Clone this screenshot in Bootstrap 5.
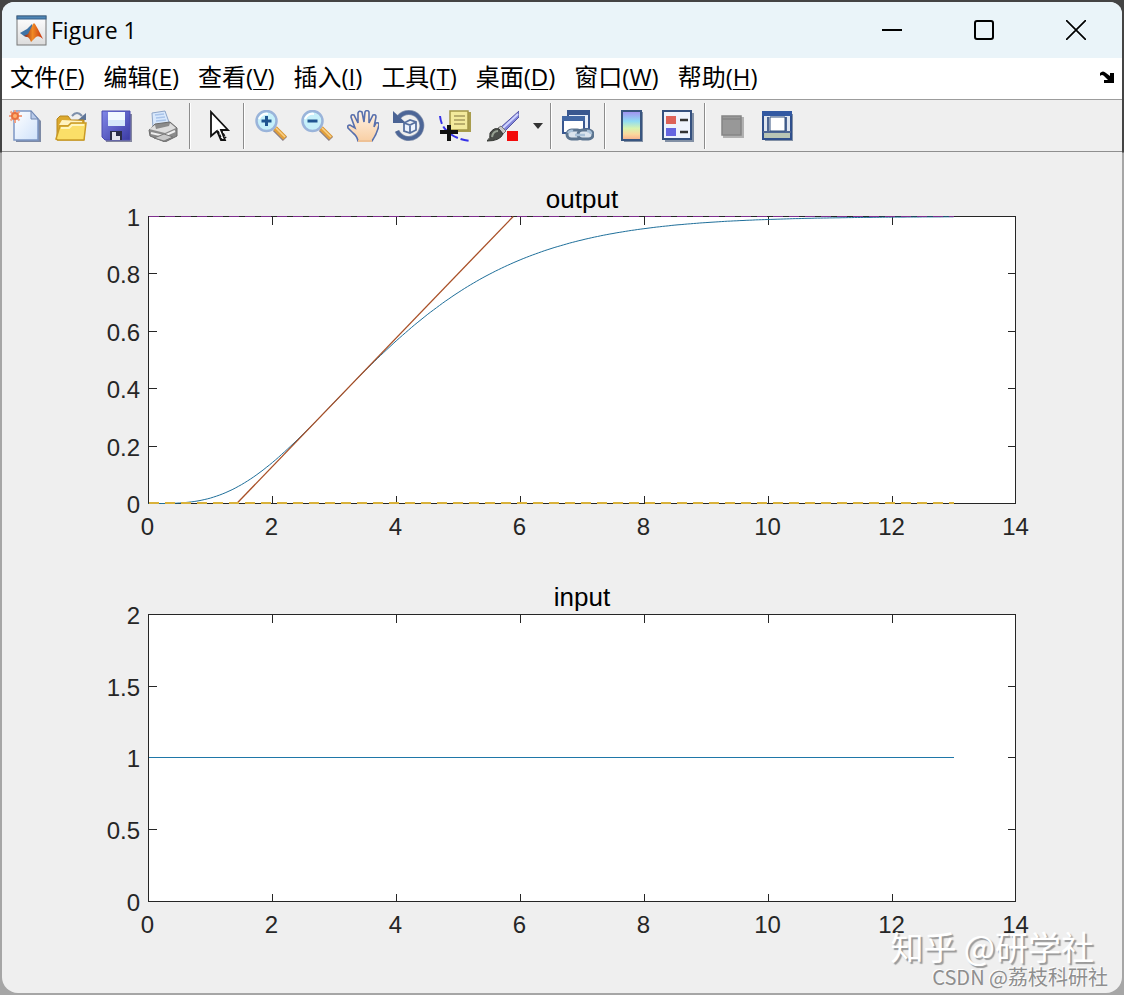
<!DOCTYPE html>
<html lang="zh-CN">
<head>
<meta charset="utf-8">
<meta name="viewport" content="width=device-width, initial-scale=1">
<title>Figure 1</title>
<link href="https://cdn.jsdelivr.net/npm/bootstrap@5.3.0/dist/css/bootstrap.min.css" rel="stylesheet">
<style>
  body { background: linear-gradient(#444 0, #444 152px, #a6a6a6 153px, #a6a6a6 100%); font-family: "Open Sans", "Noto Sans CJK SC", sans-serif; color: #000; padding: 2px; }
  .fig-window { min-height: calc(100vh - 4px); background: #efefef; border-radius: 12px 12px 16px 16px; }
  .title-bar { height: 56px; background: #eaf4f9; padding-left: 14px; }
  .title-text { font-size: 23px; line-height: 32px; font-weight: 400; }
  .win-btn { width: 92px; height: 54px; }
  .menu-bar { height: 41px; background: #fff; }
  .menu-bar .nav-link { font: 24px/32px "Open Sans", "Noto Sans CJK SC", sans-serif; color: #000; }
  .menu-list { column-gap: 19px; }
  .menu-bar u { text-underline-offset: 3px; text-decoration-thickness: 1px; }
  .tool-bar { border-top: 1px solid #9c9c9c; border-bottom: 1px solid #8f8f8f; height: 53px; }
  .plain { background: none; border: 0; padding: 0; border-radius: 0; display: flex; align-items: center; justify-content: center; flex: none; color: inherit; }
  .tool { width: 46px; height: 46px; }
  .tool-wide { width: 50px; }
  .tool-drop { width: 19px; }
  .sep { width: 8px; height: 46px; flex: none; background: linear-gradient(90deg, transparent 3px, #8c8c8c 3px, #8c8c8c 4px, #fff 4px, #fff 5px, transparent 5px); }
  .plot { display: block; width: 100%; height: auto; font-family: "Liberation Sans", Arial, sans-serif; }
  .plot-area { padding-top: 1px; }
  .ticks text { font-size: 24px; fill: #262626; }
  .heading { font-size: 26px; fill: #000; text-anchor: middle; }
  .frame { fill: none; stroke: #262626; shape-rendering: crispEdges; }
  .series { fill: none; }
  .flat { shape-rendering: crispEdges; }
  .marks { right: 14px; bottom: 4px; text-align: right; pointer-events: none; }
  .mark-big { font: 33px/38px "Noto Sans CJK SC", sans-serif; color: #fff; text-shadow: 2px 2px 1px #999; margin-right: 14px; }
  .mark-small { font: 20px/24px "Noto Sans CJK SC", sans-serif; color: #8e8e8e; text-shadow: -1px -1px 0 #fff; }
</style>
</head>
<body>
<main class="fig-window position-relative d-flex flex-column overflow-hidden">
  <header class="title-bar d-flex align-items-center">
    <svg class="flex-shrink-0" width="31" height="31" viewBox="0 0 31 31" aria-hidden="true">
      <defs>
        <linearGradient id="pk" x1="0" x2="1"><stop offset="0" stop-color="#8e1d12"/><stop offset=".45" stop-color="#f08a24"/><stop offset="1" stop-color="#c5300f"/></linearGradient>
        <linearGradient id="bx" x2="0" y2="1"><stop offset="0" stop-color="#fff"/><stop offset="1" stop-color="#dcdcdc"/></linearGradient>
      </defs>
      <rect x="1" y="1" width="29" height="29" fill="url(#bx)" stroke="#777"/>
      <rect x="1" y="1" width="29" height="3" fill="#4f86b5" stroke="#37608a"/>
      <path d="M4 18l7-4 5-5 1 4-6 9-3-1z" fill="#3f73a5"/>
      <path d="M8 21l4-2 5-10q1-1.500 2 0 3 5 5 9l3 6q-4-4-7-2l-5 5q-2-5-4-5z" fill="url(#pk)"/>
    </svg>
    <h1 class="title-text m-0 ms-1 me-auto">Figure 1</h1>
    <button class="plain win-btn" type="button" aria-label="Minimize"><svg width="20" height="20"><path d="M0 10h20" stroke="#000" stroke-width="2"/></svg></button>
    <button class="plain win-btn" type="button" aria-label="Maximize"><svg width="20" height="20"><rect x="1" y="1" width="18" height="18" rx="2" fill="none" stroke="#000" stroke-width="2"/></svg></button>
    <button class="plain win-btn" type="button" aria-label="Close"><svg width="20" height="20"><path d="M0 0L20 20M20 0L0 20" stroke="#000" stroke-width="1.700"/></svg></button>
  </header>

  <nav class="menu-bar d-flex align-items-center px-2 pb-1" aria-label="Menu">
    <ul class="menu-list nav flex-nowrap">
      <li><a class="nav-link p-0 text-nowrap" href="#">文件(<u>F</u>)</a></li>
      <li><a class="nav-link p-0 text-nowrap" href="#">编辑(<u>E</u>)</a></li>
      <li><a class="nav-link p-0 text-nowrap" href="#">查看(<u>V</u>)</a></li>
      <li><a class="nav-link p-0 text-nowrap" href="#">插入(<u>I</u>)</a></li>
      <li><a class="nav-link p-0 text-nowrap" href="#">工具(<u>T</u>)</a></li>
      <li><a class="nav-link p-0 text-nowrap" href="#">桌面(<u>D</u>)</a></li>
      <li><a class="nav-link p-0 text-nowrap" href="#">窗口(<u>W</u>)</a></li>
      <li><a class="nav-link p-0 text-nowrap" href="#">帮助(<u>H</u>)</a></li>
    </ul>
    <button class="plain ms-auto" type="button" aria-label="Dock"><svg width="14" height="12" viewBox="0 0 14 12"><path d="M0 2q3-3 6 0l4 3V2h4v10H4V9h4L4 5Q2 3 0 5z" fill="#000"/></svg></button>
  </nav>

  <div class="tool-bar d-flex align-items-center" role="toolbar" aria-label="Figure tools">
    <button class="plain tool" type="button" aria-label="New"><svg width="32" height="32" viewBox="0 0 32 32">
      <defs><linearGradient id="pg" x2="1" y2="1"><stop offset="0" stop-color="#fff"/><stop offset="1" stop-color="#cfe2fb"/></linearGradient></defs>
      <path d="M7 3h17l8 8v21H7z" fill="#7d8aa5"/><path d="M5 1h17l7 8v21H5z" fill="url(#pg)" stroke="#7c96c4" stroke-width="1.500"/><path d="M22 1v8h7z" fill="#b9cbea" stroke="#7187b0"/>
      <path d="M6 0v13M0 6h13M1.500 1.500l9 9M10.500 1.500l-9 9" stroke="#f0a083" stroke-width="2"/><circle cx="6" cy="6" r="4" fill="#e8713f"/><circle cx="6" cy="6" r="2" fill="#ffb070"/></svg></button>
    <button class="plain tool" type="button" aria-label="Open"><svg width="32" height="32" viewBox="0 0 32 32">
      <path d="M17 6q5-6 10 0" fill="none" stroke="#7d8faa" stroke-width="2"/><path d="M31 3v7h-8z" fill="#5f7598"/>
      <path d="M2 30V9l3-3h8l3 4h13v20z" fill="#dca92e" stroke="#b5861c"/><path d="M4 15L7 10l20 1v4z" fill="#fff3c0"/>
      <path d="M1 29l4-13h8l3-3h15l-2 17H3z" fill="#fbdf68" stroke="#c99a26" stroke-width="1.500"/><path d="M6 18h8l3-3h12" stroke="#fff6bd" stroke-width="2" fill="none"/></svg></button>
    <button class="plain tool" type="button" aria-label="Save"><svg width="32" height="32" viewBox="0 0 32 32">
      <defs><linearGradient id="sv" x2="1" y2="1"><stop offset="0" stop-color="#8187e8"/><stop offset="1" stop-color="#3a3aa4"/></linearGradient></defs>
      <path d="M3 4h28v28H5z" fill="#83859f"/><path d="M1 1h28v29H4l-3-3z" fill="url(#sv)" stroke="#4a4bb0"/><path d="M7 2h17v14H7z" fill="#f2f8ff"/><path d="M7 10h17v6H7z" fill="#d6e8fb"/><path d="M9 21h12v9H9z" fill="#2b2d49"/><path d="M11 22h4v4h4v4h-8z" fill="#e5e5ee"/></svg></button>
    <button class="plain tool" type="button" aria-label="Print"><svg width="32" height="32" viewBox="0 0 32 32">
      <path d="M6 18L5 3 18 1l5 14z" fill="#d8e8fc" stroke="#8ea5c8"/><path d="M8 5l9-1M9 8l9-1M9 11l10-1" stroke="#a9c4ea" stroke-width="1.500"/>
      <path d="M2 20l6-6 15-2 7 6v8l-12 6L3 26z" fill="#8b8b8b" stroke="#6b6b6b"/><path d="M2 19l6-4 1 4 13-3 1-3 6 5-11 5z" fill="#dedede"/><path d="M4 23l13 3 11-5" fill="none" stroke="#efefef" stroke-width="2"/><path d="M7 28l10 3 9-4-9-3z" fill="#c9c9c9" stroke="#777"/></svg></button>
    <span class="sep"></span>
    <button class="plain tool" type="button" aria-label="Edit plot"><svg width="32" height="32" viewBox="0 0 32 32">
      <path d="M10 2v24l6-5 4 9h4l-4-10h7z" fill="#fff" stroke="#111" stroke-width="1.800"/><path d="M17 21l4 9M20 20l5 8" stroke="#111" stroke-width="1.500" stroke-dasharray="3 1"/></svg></button>
    <span class="sep"></span>
    <button class="plain tool" type="button" aria-label="Zoom in"><svg width="32" height="32" viewBox="0 0 32 32">
      <path d="M20 19l10 10" stroke="#8b7f86" stroke-width="6"/><path d="M20 18l10 10" stroke="#e2a03b" stroke-width="5"/><path d="M21 18l9 9" stroke="#f8d08a" stroke-width="1.500"/>
      <circle cx="11.500" cy="11" r="10" fill="#c6f0fa" stroke="#9ab4da" stroke-width="2.500"/><path d="M4 9q3-6 9-5" stroke="#fff" stroke-width="2" fill="none"/><path d="M11.500 6v10M6.500 11h10" stroke="#1f5590" stroke-width="3"/></svg></button>
    <button class="plain tool" type="button" aria-label="Zoom out"><svg width="32" height="32" viewBox="0 0 32 32">
      <path d="M20 19l10 10" stroke="#8b7f86" stroke-width="6"/><path d="M20 18l10 10" stroke="#e2a03b" stroke-width="5"/><path d="M21 18l9 9" stroke="#f8d08a" stroke-width="1.500"/>
      <circle cx="11.500" cy="11" r="10" fill="#c6f0fa" stroke="#9ab4da" stroke-width="2.500"/><path d="M4 9q3-6 9-5" stroke="#fff" stroke-width="2" fill="none"/><path d="M6.500 11h10" stroke="#1f5590" stroke-width="3"/></svg></button>
    <button class="plain tool" type="button" aria-label="Pan"><svg width="32" height="32" viewBox="0 0 32 32">
      <defs><linearGradient id="hn" x2="0" y2="1"><stop offset="0" stop-color="#fff4e8"/><stop offset="1" stop-color="#f9cfa4"/></linearGradient></defs>
      <path d="M11 31q-1-5-5-8l-5-5q-1-3 2-3l5 3L4 7q0-3 3-2l4 8L11 3q1-3 4-1l2 10 1-10q2-3 4 0v11l4-8q3-1 3 2l-2 10 2-4q3-1 3 2-2 9-7 16z" fill="url(#hn)" stroke="#5870ad" stroke-width="1.600"/><path d="M11 31h14" stroke="#eec195" stroke-width="2"/></svg></button>
    <button class="plain tool" type="button" aria-label="Rotate 3D"><svg width="32" height="32" viewBox="0 0 32 32">
      <path d="M6 7a13 13 0 1 1-2 14" fill="none" stroke="#8794ae" stroke-width="5"/><path d="M6 7a13 13 0 1 1-2 14" fill="none" stroke="#4d6697" stroke-width="3.500"/><path d="M0 1v12h13z" fill="#4a6394"/>
      <path d="M11 13l6-3 6 2v8l-6 3-6-2zM11 13l6 2 6-3M17 15v8" fill="#edf3fd" stroke="#57709f" stroke-width="1.800"/></svg></button>
    <button class="plain tool" type="button" aria-label="Data cursor"><svg width="32" height="32" viewBox="0 0 32 32">
      <path d="M1 6q1 9 6 14 8 9 24 11" fill="none" stroke="#3530e8" stroke-width="2" stroke-dasharray="8 3"/><path d="M12 2h20v20H12z" fill="#a99d4e"/><path d="M11 1h18v19H11z" fill="#f3ea9c" stroke="#a39647" stroke-width="1.500"/><path d="M15 6h11M15 10h11M15 14h11" stroke="#a69a5d" stroke-width="1.500"/><path d="M10 15v16M1 22h18" stroke="#111" stroke-width="4"/></svg></button>
    <button class="plain tool tool-wide" type="button" aria-label="Brush"><svg width="32" height="32" viewBox="0 0 32 32">
      <path d="M13 18L32 1v6L17 22z" fill="#8185d9" stroke="#5455a5"/><path d="M16 18L31 4" stroke="#d0d4ff" stroke-width="2"/><path d="M11 18l3-2 5 5-3 3z" fill="#c8c8c8" stroke="#777"/><path d="M0 31q4-3 3-8 4-6 9-4l4 5q-3 7-16 7z" fill="#4a4d49" stroke="#343632"/><path d="M5 27q1-6 6-6" stroke="#96a092" stroke-width="2" fill="none"/><path d="M20 21h11v10H20z" fill="#f30b0b"/></svg></button>
    <button class="plain tool tool-drop" type="button" aria-label="Brush options"><svg width="10" height="6"><path d="M0 0h10L5 6z" fill="#333"/></svg></button>
    <span class="sep"></span>
    <button class="plain tool" type="button" aria-label="Link plots"><svg width="32" height="32" viewBox="0 0 32 32">
      <path d="M6 1h21v18H6z" fill="#e8eef8" stroke="#39578f" stroke-width="2"/><path d="M6 0h22v5H6z" fill="#39578f"/><path d="M1 7h21v16H1z" fill="#fff" stroke="#39578f" stroke-width="2"/><path d="M0 6h23v5H0z" fill="#4267a4"/>
      <rect x="5" y="20" width="15" height="9" rx="4.500" fill="#dbe4ed" stroke="#5c7590" stroke-width="3"/><rect x="16" y="20" width="15" height="9" rx="4.500" fill="#dbe4ed" stroke="#5c7590" stroke-width="3"/><path d="M6 23q2-3 5-2M13 25h10M25 21q4 0 4 3" stroke="#a9c1d8" stroke-width="2.500" fill="none"/></svg></button>
    <span class="sep"></span>
    <button class="plain tool" type="button" aria-label="Insert colorbar"><svg width="32" height="32" viewBox="0 0 32 32">
      <defs><linearGradient id="cb" x2="0" y2="1"><stop offset="0" stop-color="#a38df0"/><stop offset=".35" stop-color="#8fdcf4"/><stop offset=".6" stop-color="#d8f4b0"/><stop offset=".8" stop-color="#fbd89d"/><stop offset="1" stop-color="#f7ad8c"/></linearGradient></defs>
      <path d="M8 2h19v30H8z" fill="#8290a5"/><path d="M6 1h19v29H6z" fill="url(#cb)" stroke="#38557f" stroke-width="2"/></svg></button>
    <button class="plain tool" type="button" aria-label="Insert legend"><svg width="32" height="32" viewBox="0 0 32 32">
      <path d="M3 3h29v29H3z" fill="#8290a5"/><path d="M1 1h28v28H1z" fill="#eef3fc" stroke="#34507f" stroke-width="2"/><path d="M4 6h10v8H4z" fill="#dd6258"/><path d="M4 18h10v8H4z" fill="#6565e0"/><path d="M18 10h8M18 22h8" stroke="#333" stroke-width="2.500"/></svg></button>
    <span class="sep"></span>
    <button class="plain tool" type="button" aria-label="Hide plot tools"><svg width="32" height="32" viewBox="0 0 32 32">
      <path d="M7 7h21v21H7z" fill="#b1b1b1"/><path d="M6 6h19v19H6z" fill="#989898" stroke="#858585" stroke-width="1.500"/><path d="M6 9h19" stroke="#868686" stroke-width="1.500"/></svg></button>
    <button class="plain tool" type="button" aria-label="Show plot tools"><svg width="32" height="32" viewBox="0 0 32 32">
      <path d="M3 4h28v27H3z" fill="#8290a5"/><path d="M1 2h28v27H1z" fill="#dfe6f0" stroke="#2f4f8c" stroke-width="2"/><path d="M0 1h30v5H0z" fill="#3158a2"/><path d="M6 7v15M24 7v15M1 22h28" stroke="#4d6694" stroke-width="2"/><path d="M8 7h15v14H8z" fill="#fff" stroke="#33507f"/><path d="M2 23h26v5H2z" fill="#b9c5b5"/></svg></button>
  </div>

  <section class="plot-area flex-grow-1 pb-4" aria-label="Plots">
    <svg class="plot" viewBox="0 0 1120 398" data-ymax="1" data-ystep="0.2" role="img" aria-label="output">
      <text class="heading" x="580" y="55">output</text>
      <rect x="146" y="63" width="868" height="288" fill="#fff"/>
      <path class="frame" d="M146.500 63.500h867v287h-867z"/>
      <g class="ticks"></g>
      <g class="lines"></g>
    </svg>
    <svg class="plot" viewBox="0 0 1120 398" data-ymax="2" data-ystep="0.5" role="img" aria-label="input">
      <text class="heading" x="580" y="55">input</text>
      <rect x="146" y="63" width="868" height="288" fill="#fff"/>
      <path class="frame" d="M146.500 63.500h867v287h-867z"/>
      <g class="ticks"></g>
      <g class="lines"></g>
    </svg>
  </section>

  <div class="marks position-absolute">
    <div class="mark-big">知乎 @研学社</div>
    <div class="mark-small">CSDN @荔枝科研社</div>
  </div>
</main>
<script src="https://cdn.jsdelivr.net/npm/bootstrap@5.3.0/dist/js/bootstrap.bundle.min.js"></script>
<script>
  const LEFT = 146.5, TOP = 63.5, W = 867, H = 287, XMAX = 14, TICK = 8;
  const px = t => LEFT + t / XMAX * W;
  const snap = v => Math.ceil(v) - 0.5;
  const plots = document.querySelectorAll('.plot');

  // Axis ticks on all four sides, labels on the left and bottom.
  plots.forEach(svg => {
    const ymax = +svg.dataset.ymax, step = +svg.dataset.ystep;
    let d = '', labels = '';
    for (let x = 0; x <= XMAX; x += 2) {
      const p = Math.round(px(x)) - (x === 0 || x === XMAX ? 0.5 : -0.5);
      d += `M${p} ${TOP}v${TICK}M${p} ${TOP + H}v${-TICK}`;
      labels += `<text x="${145.5 + 62 * x}" y="${TOP + H + 31}" text-anchor="middle">${x}</text>`;
    }
    for (let i = 0; i <= Math.round(ymax / step); i++) {
      const v = i * step, p = snap(TOP + H - v / ymax * H);
      d += `M${LEFT} ${p}h${TICK}M${LEFT + W} ${p}h${-TICK}`;
      labels += `<text x="138" y="${p + 9}" text-anchor="end">${+v.toFixed(1)}</text>`;
    }
    svg.querySelector('.ticks').innerHTML = `<path class="frame" d="${d}"/>${labels}`;
  });

  // Step response of 1/(s+1)^4 with its tangent at the inflection point t = 3.
  const y = t => 1 - Math.exp(-t) * (1 + t + t * t / 2 + t ** 3 / 6);
  const py = v => TOP + H - v * H;
  const pts = [];
  for (let t = 0; t <= 13.001; t += 0.05) pts.push(px(t).toFixed(1) + ',' + py(y(t)).toFixed(1));
  const slope = 4.5 * Math.exp(-3), t0 = 3 - y(3) / slope, t1 = t0 + 1 / slope;
  const line = (a, b, v, w, colour, dash) =>
    `<path class="series flat" d="M${px(a)} ${v}H${px(b)}" stroke="${colour}" stroke-width="${w}" ${dash ? `stroke-dasharray="${dash}"` : ''}/>`;
  plots[0].querySelector('.lines').innerHTML =
    `<polyline class="series" points="${pts.join(' ')}" stroke="#1f6f9a"/>` +
    `<path class="series" d="M${px(t0)} ${py(0)}L${px(t1)} ${py(1)}" stroke="#a84f26" stroke-width="1.300"/>` +
    line(0, 13, 350, 2, '#d9b23c', '10 6') +
    line(0, 13, TOP, 1, '#7e2f8e', '10 6');
  plots[1].querySelector('.lines').innerHTML = line(0, 13, snap(TOP + H / 2), 1, '#1f77a8');
</script>
</body>
</html>
